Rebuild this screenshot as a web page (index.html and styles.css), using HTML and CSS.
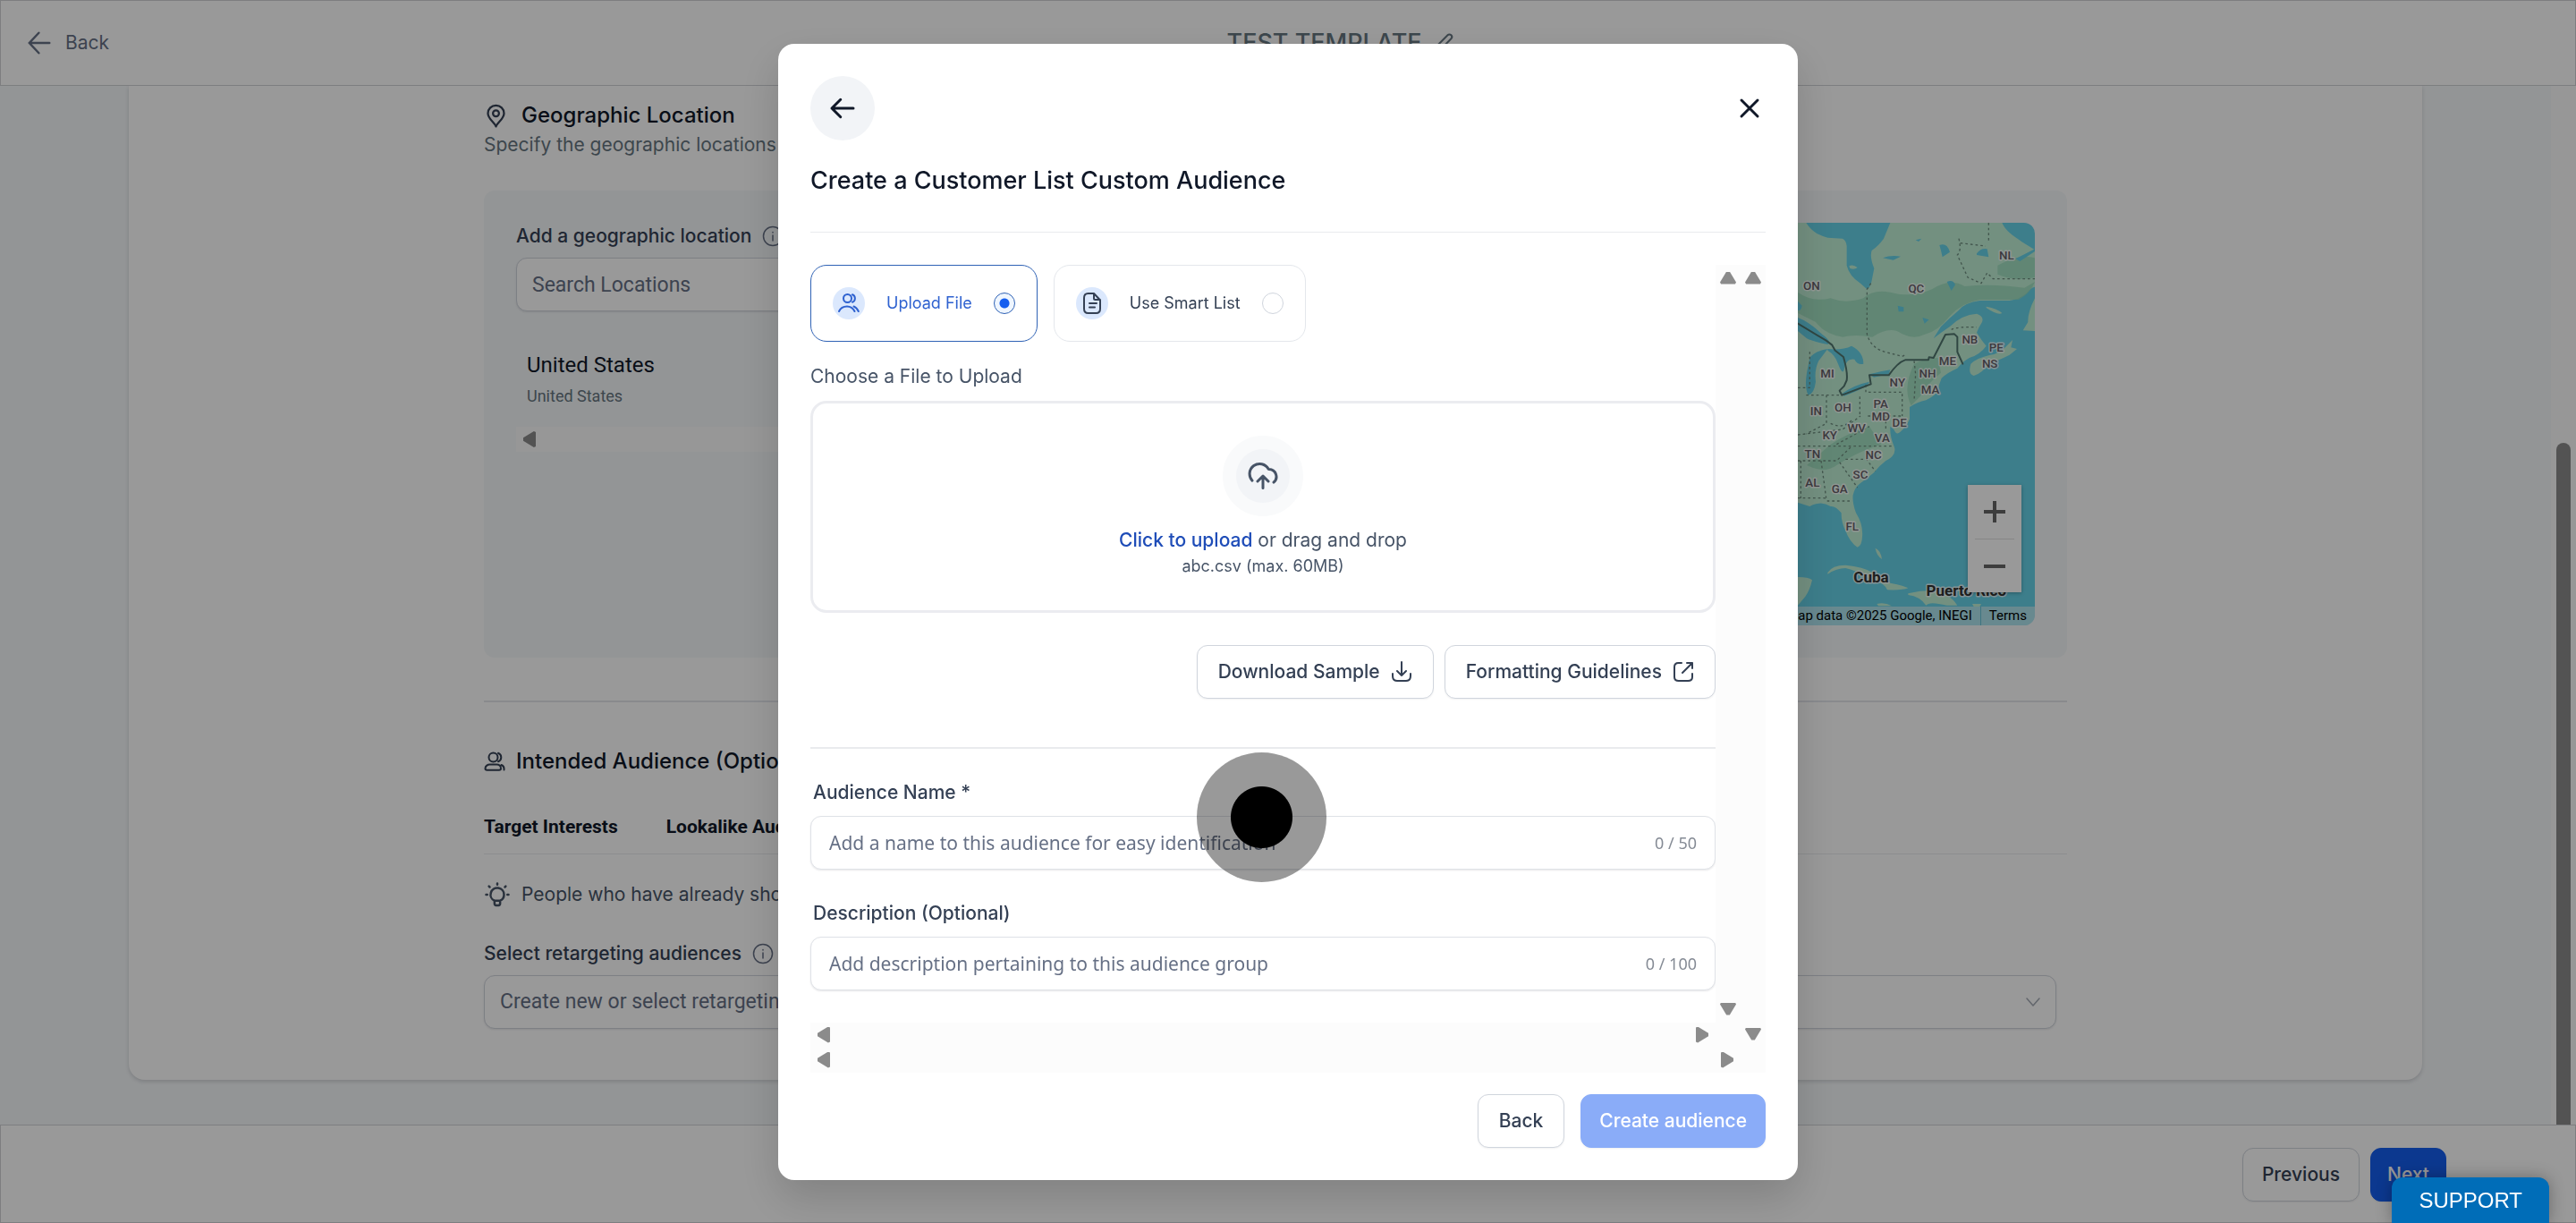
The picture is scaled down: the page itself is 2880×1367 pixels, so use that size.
FILE: index.html
```html
<!DOCTYPE html>
<html lang="en">
<head>
<meta charset="utf-8">
<meta name="viewport" content="width=device-width, initial-scale=1">
<title>Test Template</title>
<link rel="stylesheet" href="styles.css">
</head>
<body>
<div class="app">
  <header class="topbar">
    <button type="button" class="topbar-back">
      <svg class="icon-30" viewBox="0 0 24 24" aria-hidden="true"><path d="M21 12H3m0 0 8.500-9M3 12l8.500 9"/></svg>
      Back
    </button>
    <div class="topbar-title">
      <h1>TEST TEMPLATE</h1>
      <svg class="icon-24" viewBox="0 0 24 24" aria-hidden="true"><path d="M3 21l1-4.600c.1-.6.300-.9.600-1.200L16.500 3.300a2.600 2.600 0 0 1 3.900 3.900L8.600 19.300c-.3.300-.6.500-1.100.6z"/></svg>
    </div>
  </header>

  <div class="viewport">
    <main class="card">
      <div class="content">
        <section>
          <h2 class="section-title gap-wide">
            <svg class="icon-27" viewBox="0 0 24 24" aria-hidden="true"><circle cx="12" cy="10" r="3"/><path d="M12 23c-1-3.500-8-7.500-8-13a8 8 0 0 1 16 0c0 5.500-7 9.500-8 13z"/></svg>
            Geographic Location
          </h2>
          <p class="section-sub">Specify the geographic locations</p>
          <div class="panel">
            <div class="places">
              <div class="label-row">
                <label for="geo">Add a geographic location</label>
                <svg class="icon-24 thin" viewBox="0 0 24 24" aria-hidden="true"><circle cx="12" cy="12" r="10.500"/><path d="M12 11v6M12 7.500v.5"/></svg>
              </div>
              <input id="geo" class="field roboto" type="text" placeholder="Search Locations">
              <div class="place">
                <p class="place-name">United States</p>
                <p class="place-country">United States</p>
              </div>
              <div class="track-h"><span class="tri left"></span><span class="tri right"></span></div>
            </div>
            <div class="map">
              <svg class="map-art" viewBox="90 147 795 1350" aria-hidden="true">
                <path class="land" d="M90 147H118C135 175 160 190 190 197L240 200Q252 205 254 225V290Q262 325 300 350L322 370Q335 365 340 330L346 300Q330 260 338 240Q360 225 378 200L400 147H775C790 180 815 190 840 210L885 238V362Q870 365 855 385Q830 405 800 408H700Q650 415 630 440Q600 465 570 495L545 535Q570 515 600 495Q640 455 690 452Q715 460 708 480Q695 500 690 515Q705 540 722 560Q700 590 665 600Q640 615 625 635Q590 650 572 668Q562 690 560 712Q545 730 520 742Q490 748 465 765V805Q455 830 432 850Q420 860 412 840L400 830Q398 860 412 895Q425 925 385 945Q365 960 345 985Q315 1010 300 1020Q280 1035 275 1060Q272 1085 285 1120Q310 1160 306 1200Q305 1230 290 1235Q265 1220 250 1180Q235 1150 236 1120Q215 1095 200 1098Q180 1085 160 1088Q140 1090 130 1098L90 1085Z"/>
                <path class="land" d="M722 428Q760 435 775 450Q760 458 722 432ZM885 400Q860 450 862 480L845 508L885 510ZM670 620Q690 600 735 590Q770 585 790 560L810 540L805 565L825 570L800 590Q760 610 730 620Q710 650 680 660Q660 655 670 620ZM262 292Q275 285 290 297Q280 305 265 300ZM190 1320Q205 1295 250 1295Q310 1300 340 1320Q390 1345 400 1355Q450 1365 460 1372Q440 1380 390 1378Q380 1355 340 1345Q280 1310 250 1305Q220 1305 190 1325ZM90 1335Q125 1335 138 1345Q130 1380 115 1400L90 1430ZM460 1390Q500 1380 540 1380Q600 1390 625 1430H590Q530 1415 520 1430Q500 1400 460 1395ZM350 1238Q368 1245 372 1275Q355 1265 350 1240ZM355 1425Q380 1418 405 1432H360ZM675 1425H705L700 1434H680Z"/>
                <path class="forest" d="M90 380Q140 415 200 400Q250 420 310 400Q340 370 400 380Q470 400 540 370Q600 330 650 360Q740 350 850 365L885 345Q870 385 830 405H700Q640 415 600 460Q560 510 520 520Q480 540 440 520Q400 490 340 530Q280 520 240 530Q180 520 150 480Q110 460 90 450ZM760 290Q830 250 885 265V330Q820 345 760 320ZM480 620Q520 600 560 600L570 650Q520 690 500 730L470 760Q440 700 480 620ZM200 890Q260 850 330 830L370 890Q300 910 220 960Q180 990 120 960Z"/>
                <path class="water" d="M90 465Q130 480 170 520Q205 545 190 555Q140 545 120 535L90 510ZM130 600Q150 575 190 570Q175 590 160 610Q145 640 150 680Q145 720 125 725Q112 700 120 650ZM190 570Q240 575 270 560Q310 580 310 620Q290 625 280 605Q250 600 245 640Q240 660 225 620Q215 590 190 575ZM238 720Q280 690 330 680L322 695Q280 715 245 728ZM330 655Q370 645 400 640L395 655L345 665ZM90 410L104 425Q100 445 90 440ZM375 265Q400 255 435 260L410 272ZM565 222Q590 212 600 245L575 262L570 240ZM690 250Q705 230 725 235L730 262L690 255ZM820 268L885 235V243L835 276ZM590 345Q610 335 618 355L605 375ZM425 425L445 430V445H428ZM485 205L505 200L495 210ZM508 465L530 472L515 485Z"/>
                <path class="border-thin" d="M335 350L322 370V520Q335 570 390 582L440 595L455 588M730 147V215M630 200Q640 240 625 255L660 330L705 350L725 315L745 335H885M605 505Q625 495 690 497M118 725H186V820L118 855M186 725H230M298 730V795M318 690V715H440V795M325 795H440M90 700H130V580M480 610L485 655L480 745M90 858L240 840L300 795M220 890L330 830M90 896H405M90 945H220L270 897M100 945V1070M168 945L185 1070M90 1070H180L190 1080H270M230 950L290 1035M250 940H320L350 980M200 820Q240 840 270 810M385 795V840M635 215L720 225"/>
                <path class="border-main" d="M90 485L185 542L205 557L215 575L243 597Q258 650 254 675L245 695L230 710L238 725L335 688L330 658H395Q425 615 450 607H528L530 598L545 600L585 522L615 520L625 530V580L643 620"/>
                <g class="states">
                  <text x="136" y="373">ON</text><text x="487" y="382">QC</text><text x="790" y="270">NL</text><text x="667" y="552">NB</text><text x="755" y="580">PE</text><text x="734" y="634">NS</text><text x="592" y="624">ME</text><text x="525" y="666">NH</text><text x="534" y="720">MA</text><text x="424" y="696">NY</text><text x="189" y="665">MI</text><text x="151" y="791">IN</text><text x="241" y="779">OH</text><text x="368" y="769">PA</text><text x="368" y="809">MD</text><text x="431" y="832">DE</text><text x="287" y="850">WV</text><text x="197" y="872">KY</text><text x="373" y="881">VA</text><text x="139" y="936">TN</text><text x="344" y="940">NC</text><text x="300" y="1004">SC</text><text x="139" y="1031">AL</text><text x="230" y="1053">GA</text><text x="272" y="1178">FL</text>
                </g>
                <g class="countries"><text x="336" y="1354">Cuba</text><text x="655" y="1399">Puerto Rico</text></g>
              </svg>
              <div class="map-legal"><span>Map data ©2025 Google, INEGI</span><a href="#terms">Terms</a></div>
              <div class="map-zoom">
                <button type="button" aria-label="Zoom in"><svg class="icon-24" viewBox="0 0 24 24"><path d="M12 0v24M0 12h24"/></svg></button>
                <button type="button" aria-label="Zoom out"><svg class="icon-24" viewBox="0 0 24 24"><path d="M0 12h24"/></svg></button>
              </div>
            </div>
          </div>
        </section>

        <section class="audience">
          <h2 class="section-title">
            <svg class="icon-24" viewBox="0 0 24 24" aria-hidden="true"><circle cx="10.500" cy="7.500" r="5"/><path d="M16 2.800a5 5 0 0 1 0 9.400M1.500 20c0-3 3-4.500 5-4.500h8c2 0 4.500 1.500 4.500 4.500 0 1.200-.8 1.700-2 1.700H3.500c-1.200 0-2-.5-2-1.700zM19.500 16c2.200.7 3.300 2.500 3 5.500"/></svg>
            Intended Audience (Optional)
          </h2>
          <nav class="tabs">
            <a href="#interests">Target Interests</a>
            <a href="#lookalike">Lookalike Audience</a>
          </nav>
          <p class="tip">
            <svg class="icon-30" viewBox="0 0 24 24" aria-hidden="true"><path d="M9.500 17.700V20a1.500 1.500 0 0 0 1.500 1.500h2a1.500 1.500 0 0 0 1.500-1.500v-2.300M12 2v1M3 12H2M22 12h-1M5.200 5.200l-.7-.7M18.800 5.200l.7-.7M18 12a6 6 0 1 0-8.500 5.400h5A6 6 0 0 0 18 12z"/></svg>
            People who have already shown interest
          </p>
          <div class="label-row">
            <label for="retarget">Select retargeting audiences</label>
            <svg class="icon-24 thin" viewBox="0 0 24 24" aria-hidden="true"><circle cx="12" cy="12" r="10.500"/><path d="M12 11v6M12 7.500v.5"/></svg>
          </div>
          <div class="select-wrap">
            <select id="retarget" class="field roboto"><option>Create new or select retargeting audiences</option></select>
            <svg class="icon-24 chevron" viewBox="0 0 24 24" aria-hidden="true"><path d="M5 8l7 8 7-8"/></svg>
          </div>
        </section>
      </div>
    </main>
    <div class="page-scroll"><span class="page-thumb"></span></div>
  </div>

  <footer class="bottombar">
    <button type="button" class="btn btn-prev">Previous</button>
    <button type="button" class="btn btn-next">Next</button>
  </footer>
</div>

<div class="overlay">
  <div class="modal" role="dialog" aria-modal="true" aria-labelledby="modal-title">
    <div class="modal-top">
      <button type="button" class="round-back" aria-label="Back"><svg class="icon-36" viewBox="0 0 24 24"><path d="M20 12H4m0 0 6.500-6.500M4 12l6.500 6.500"/></svg></button>
      <button type="button" class="close" aria-label="Close"><svg class="icon-36" viewBox="0 0 24 24"><path d="M18 6 6 18M6 6l12 12"/></svg></button>
    </div>
    <h2 id="modal-title" class="modal-title">Create a Customer List Custom Audience</h2>

    <div class="scroller">
      <div class="scroller">
        <form class="form">
          <div class="sources">
            <label class="source selected">
              <span class="source-icon"><svg class="icon-24" viewBox="0 0 24 24" aria-hidden="true"><circle cx="10.500" cy="6.500" r="4.500"/><path d="M16 2.300a4.500 4.500 0 0 1 0 8.400M1 21c1.800-4 5.500-5.500 9-5.500s6.500 1.500 8.500 5.500M17.500 15.500c2 .8 4 2.700 5.300 5.500"/></svg></span>
              Upload File
              <input type="radio" name="source" checked>
            </label>
            <label class="source">
              <span class="source-icon"><svg class="icon-24" viewBox="0 0 24 24" aria-hidden="true"><path d="M14 1v5.500c0 .9.500 1.500 1.500 1.500H21M15 16.500H9M17 12H9M21 8.500V18c0 3-1.500 5-4.500 5h-9C4.500 23 3 21 3 18V6c0-3 1.500-5 4.500-5H14z"/></svg></span>
              Use Smart List
              <input type="radio" name="source">
            </label>
          </div>
          <label class="choose" for="file">Choose a File to Upload</label>
          <label class="drop">
            <input id="file" class="sr-only" type="file">
            <span class="drop-icon"><svg class="icon-36" viewBox="0 0 24 24" aria-hidden="true"><path d="M8 16l4-4m0 0 4 4m-4-4v9m8-4.300A5.500 5.500 0 0 0 16.500 7c-.2 0-.4-.1-.4-.2A7.500 7.500 0 1 0 4 15.500"/></svg></span>
            <span class="drop-text"><b>Click to upload</b> or drag and drop</span>
            <span class="drop-hint">abc.csv (max. 60MB)</span>
          </label>
          <div class="actions">
            <button type="button" class="btn">Download Sample <svg class="icon-24" viewBox="0 0 24 24" aria-hidden="true"><path d="M2 14v2.500C2 20 3.500 22 7 22h10c3.500 0 5-2 5-5.500V14M12 1v15m0 0-5-5m5 5 5-5"/></svg></button>
            <button type="button" class="btn">Formatting Guidelines <svg class="icon-24" viewBox="0 0 24 24" aria-hidden="true"><path d="M22 8V2h-6M22 2 11 13M10 2H6.500C3.500 2 2 3.500 2 6.500v11c0 3 1.500 4.500 4.500 4.500h11c3 0 4.500-1.500 4.500-4.500V14"/></svg></button>
          </div>
          <hr class="rule">
          <label class="form-label" for="name">Audience Name *</label>
          <div class="field counted"><input id="name" type="text" placeholder="Add a name to this audience for easy identification"><span>0 / 50</span></div>
          <label class="form-label" for="desc">Description (Optional)</label>
          <div class="field counted"><input id="desc" type="text" placeholder="Add description pertaining to this audience group"><span>0 / 100</span></div>
        </form>
        <div class="track-v"><span class="tri up"></span><span class="tri down"></span></div>
        <div class="track-h"><span class="tri left"></span><span class="tri right"></span></div>
      </div>
      <div class="track-v"><span class="tri up"></span><span class="tri down"></span></div>
      <div class="track-h"><span class="tri left"></span><span class="tri right"></span></div>
    </div>

    <div class="modal-actions">
      <button type="button" class="btn">Back</button>
      <button type="button" class="btn btn-create">Create audience</button>
    </div>
    <span class="pointer"></span>
  </div>
</div>
<button type="button" class="support">SUPPORT</button>
</body>
</html>
```

FILE: styles.css
```css
* { box-sizing: border-box; }
body { margin: 0; font-family: Inter, "Liberation Sans", sans-serif; font-size: 21px; line-height: 30px; color: #344054; background: #f5f8fa; }
h1, h2, p { margin: 0; font-weight: 500; }
button, input, select { font: inherit; color: inherit; margin: 0; }
button { cursor: pointer; }
a { color: inherit; text-decoration: none; }
svg { fill: none; stroke: currentColor; stroke-width: 2; stroke-linecap: round; stroke-linejoin: round; flex: none; }
.icon-24 { width: 24px; height: 24px; }
.icon-27 { width: 27px; height: 30px; }
.icon-30 { width: 30px; height: 30px; }
.icon-36 { width: 36px; height: 36px; }
.thin { stroke-width: 1.5; }

/* Application behind the dialog */
.app { height: 100vh; display: flex; flex-direction: column; overflow: hidden; }
.topbar { flex: none; height: 96px; padding: 0 28px; display: flex; align-items: center; background: #fff; border: 1px solid #d0d2d6; }
.topbar-back { display: flex; align-items: center; gap: 14px; padding: 0; border: 0; background: none; color: #667085; }
.topbar-title { flex: 1; display: flex; align-items: center; justify-content: center; gap: 12px; padding-left: 24px; color: #667680; }
.topbar-title h1 { font-size: 27px; line-height: 36px; font-weight: 500; }
.viewport { flex: 1; min-height: 0; display: flex; align-items: flex-start; overflow: hidden; }
.card { flex: 1; min-width: 0; margin: 0 144px; padding: 15px 24px 57px; background: #fff; border-radius: 0 0 18px 18px; box-shadow: 0 2px 4px rgba(16, 24, 40, .16); }
.content { max-width: 1770px; margin: 0 auto; }
.page-scroll { width: 28px; align-self: stretch; display: flex; flex-direction: column; justify-content: flex-end; padding: 0 6px; background: #fcfcfc; }
.page-thumb { height: 65.6%; background: #8b8b8b; border-radius: 8px 8px 0 0; }
.section-title { display: flex; align-items: center; gap: 12px; font-size: 24px; line-height: 36px; color: #101828; }
.section-title svg { color: #344054; }
.gap-wide { gap: 15px; }
.section-sub { font-weight: 400; color: #667680; }
.panel { display: grid; grid-template-columns: 1fr 1fr; gap: 24px; margin-top: 36px; padding: 36px; background: #f5f8fa; border-radius: 12px; }
.label-row { display: flex; align-items: center; gap: 12px; font-weight: 500; }
.label-row svg { color: #667085; }
.field { display: flex; width: 100%; height: 60px; margin-top: 9px; padding: 0 17px; background: #fff; border: 1px solid #d0d5dd; border-radius: 12px; box-shadow: 0 1px 2px rgba(16, 24, 40, .1); }
.roboto { font-family: Roboto, "Liberation Sans", sans-serif; font-size: 23px; color: #667085; }
.field::placeholder, .field input::placeholder { color: #667085; opacity: 1; }
.place { margin-top: 42px; padding-left: 12px; font-family: Roboto, "Liberation Sans", sans-serif; }
.place p { font-weight: 400; }
.place-name { font-size: 24px; line-height: 36px; color: #101828; }
.place-country { margin-top: 3px; font-size: 18px; line-height: 27px; color: #667680; }
.places .track-h { margin-top: 21px; }

/* Map */
.map { position: relative; height: 450px; display: flex; justify-content: flex-end; overflow: hidden; border-radius: 12px; background: #66d2e8; }
.map-art { height: 450px; width: 265px; stroke: none; }
.land { fill: #c0f0d6; }
.forest { fill: #98dbb9; opacity: .75; }
.water { fill: #66d2e8; }
.border-thin { stroke: #6f8f80; stroke-width: 4; stroke-dasharray: 8 9; stroke-linecap: butt; }
.border-main { stroke: #51766f; stroke-width: 6; }
.states, .countries { font-family: Roboto, sans-serif; text-anchor: middle; paint-order: stroke; stroke: #fff; stroke-opacity: .75; stroke-width: 9px; }
.states { font-size: 40px; font-weight: 500; fill: #655f68; }
.countries { font-size: 51px; font-weight: 700; fill: #333; }
.map-legal { position: absolute; right: 0; bottom: 0; display: flex; font: 15px/21px Roboto, sans-serif; color: #000; background: rgba(245, 245, 245, .5); }
.map-legal span { padding: 0 9px; border-right: 1px solid #66c2d8; }
.map-legal a { padding: 0 9px; }
.map-zoom { position: absolute; right: 15px; bottom: 37px; width: 60px; padding: 0 8px; background: #fff; color: #666; box-shadow: 0 1px 4px rgba(0, 0, 0, .3); }
.map-zoom button { display: flex; align-items: center; justify-content: center; width: 44px; height: 60px; padding: 0; border: 0; background: none; }
.map-zoom button + button { border-top: 1px solid #e0e0e0; }
.map-zoom svg { stroke-width: 4; stroke-linecap: butt; }

.audience { margin-top: 48px; padding-top: 48px; border-top: 2px solid #e4e7ec; }
.tabs { display: flex; gap: 54px; margin-top: 40px; padding-bottom: 15px; border-bottom: 1px solid #e9ebee; font-family: Roboto, "Liberation Sans", sans-serif; font-weight: 700; color: #101828; }
.tip { display: flex; align-items: center; gap: 12px; margin: 30px 0 36px; font-weight: 400; color: #475467; }
.select-wrap { position: relative; margin-right: 12px; }
.select-wrap select { appearance: none; }
.chevron { position: absolute; right: 14px; top: 18px; color: #a5abb5; stroke-width: 1.5; }

.bottombar { flex: none; height: 110px; display: flex; justify-content: flex-end; align-items: flex-start; gap: 12px; padding: 25px 144px; background: #fff; border: 1px solid #d0d2d6; }
.btn { display: flex; align-items: center; gap: 12px; height: 60px; padding: 0 23px; font-weight: 500; background: #fff; border: 1px solid #d0d5dd; border-radius: 12px; box-shadow: 0 1px 2px rgba(16, 24, 40, .06); white-space: nowrap; }
.btn-prev { padding: 0 21px; }
.btn-next { padding: 0 18px; background: #155eef; border-color: #155eef; color: #fff; }

/* Dialog */
.overlay { position: fixed; inset: 0; display: flex; align-items: center; justify-content: center; background: rgba(0, 0, 0, .4); }
.modal { position: relative; width: 1140px; max-width: 100%; padding: 36px; background: #fff; border-radius: 18px; box-shadow: 0 20px 48px rgba(0, 0, 0, .16); }
.modal-top { display: flex; align-items: center; justify-content: space-between; color: #101828; }
.round-back { display: flex; align-items: center; justify-content: center; width: 72px; height: 72px; padding: 0; border: 0; border-radius: 50%; background: #f2f4f7; }
.close { display: flex; padding: 0; border: 0; background: none; }
.modal-title { margin: 27px 0 36px; padding-bottom: 39px; border-bottom: 1px solid #e9ebee; font-size: 27px; line-height: 36px; color: #101828; }
.scroller { display: grid; grid-template-columns: minmax(0, 1fr) 28px; }
.track-v, .track-h { display: flex; justify-content: space-between; background: #fcfcfc; }
.track-v { flex-direction: column; width: 28px; padding: 8px 5px; }
.track-h { height: 28px; padding: 5px 8px; }
.scroller > .track-h { box-shadow: 28px 0 #fcfcfc; }
.tri { background: #8b8b8b; }
.up, .down { width: 18px; height: 14px; }
.left, .right { width: 14px; height: 18px; }
.up { clip-path: polygon(40% 0, 60% 0, 100% 85%, 94% 100%, 6% 100%, 0 85%); }
.down { clip-path: polygon(6% 0, 94% 0, 100% 15%, 60% 100%, 40% 100%, 0 15%); }
.left { clip-path: polygon(85% 0, 100% 6%, 100% 94%, 85% 100%, 0 60%, 0 40%); }
.right { clip-path: polygon(15% 0, 100% 40%, 100% 60%, 15% 100%, 0 94%, 0 6%); }
.places .right { visibility: hidden; }

.form { padding-bottom: 36px; }
.sources { display: flex; gap: 18px; }
.source { display: flex; align-items: center; gap: 24px; height: 86px; padding: 0 24px; border: 1px solid #e4e7ec; border-radius: 18px; font-size: 18px; }
.source.selected { border-color: #2f62b5; color: #2f62d0; }
.source-icon { display: flex; align-items: center; justify-content: center; width: 36px; height: 36px; border-radius: 50%; background: #dbe8fd; }
.source input { appearance: none; width: 24px; height: 24px; border: 1px solid #d0d5dd; border-radius: 50%; background: #fff; }
.source input:checked { border-color: #2f62b5; background: radial-gradient(circle, #155eef 5px, #eff6ff 6px); }
.choose { display: block; margin: 24px 0 12px; color: #475467; }
.drop { display: flex; flex-direction: column; align-items: center; padding: 36px; border: 3px solid #ebecf0; border-radius: 18px; color: #475467; }
.sr-only { position: absolute; width: 1px; height: 1px; opacity: 0; }
.drop-icon { display: flex; align-items: center; justify-content: center; width: 90px; height: 90px; margin-bottom: 12px; border: 15px solid #f9fafb; border-radius: 50%; background: #f2f4f7; }
.drop-text b { font-weight: 500; color: #1f4db8; }
.drop-hint { font-size: 18px; line-height: 27px; }
.actions { display: flex; justify-content: flex-end; gap: 12px; margin-top: 36px; }
.rule { height: 2px; margin: 54px 0 0; border: 0; background: #e9ebee; }
.form-label { display: block; margin: 34px 3px 11px; font-weight: 500; }
.counted { align-items: center; margin-top: 0; padding: 0 20px; border-color: #dfe2e7; font-family: "Noto Sans", "Open Sans", sans-serif; }
.counted input { flex: 1; min-width: 0; padding: 0; border: 0; outline: 0; background: none; }
.counted span { font-size: 18px; color: #858b95; }
.modal-actions { display: flex; justify-content: flex-end; gap: 18px; margin-top: 24px; }
.btn-create { padding: 0 20px; background: #8aacf8; border-color: #8aacf8; color: #fff; }
.pointer { position: absolute; left: 468px; top: 792px; width: 145px; height: 145px; border-radius: 50%; background: radial-gradient(circle, #000 34px, rgba(0, 0, 0, .4) 35px); pointer-events: none; }
.support { position: fixed; right: 30px; bottom: 0; height: 51px; padding: 0 30px; border: 0; border-radius: 12px 12px 0 0; background: #006db8; color: #fff; font-family: "Liberation Sans", sans-serif; font-size: 24px; box-shadow: 0 0 18px rgba(0, 0, 0, .3); }
```
